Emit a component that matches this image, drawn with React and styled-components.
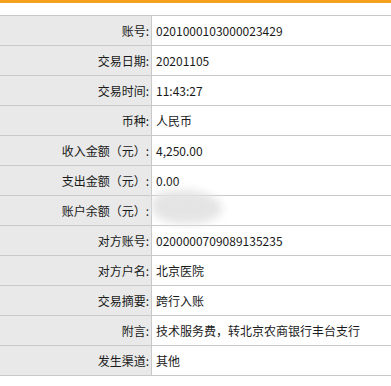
import React from "react";
import styled, { createGlobalStyle } from "styled-components";

const rows = [
  ["账号", "0201000103000023429"],
  ["交易日期", "20201105"],
  ["交易时间", "11:43:27"],
  ["币种", "人民币"],
  ["收入金额（元）", "4,250.00"],
  ["支出金额（元）", "0.00"],
  ["账户余额（元）", null],
  ["对方账号", "0200000709089135235"],
  ["对方户名", "北京医院"],
  ["交易摘要", "跨行入账"],
  ["附言", "技术服务费，转北京农商银行丰台支行"],
  ["发生渠道", "其他"],
];

const App = () => {
  return (
    <Page>
      <Global />
      <TopBar />
      <Table>
        {rows.map(([label, value]) => (
          <Row key={label}>
            <Label>{label}:</Label>
            <Value>{value === null ? <Smudge /> : value}</Value>
          </Row>
        ))}
      </Table>
    </Page>
  );
};

export default App;

const Global = createGlobalStyle`
  body {
    margin: 0;
    background: #fff;
    font-family: "Noto Sans CJK SC", "Noto Sans", sans-serif;
  }
`;
const Page = styled.div`
  width: 391px;
  height: 386px;
  overflow: hidden;
  background: #fff;
`;
const TopBar = styled.div`
  height: 3px;
  background: #f6a11e;
  margin-bottom: 12px;
`;
const Table = styled.div`
  border-top: 1px solid #c9c9c9;
`;
const Row = styled.div`
  display: grid;
  grid-template-columns: 152px 1fr;
  height: 29px;
  border-bottom: 1px solid #c9c9c9;
  font-size: 12px;
  color: #1a1a1a;
`;
const Label = styled.div`
  background: #e8e9e8;
  border-right: 1px solid #c9c9c9;
  display: flex;
  align-items: center;
  justify-content: flex-end;
  padding-right: 2px;
`;
const Value = styled.div`
  display: flex;
  align-items: center;
  padding-left: 4px;
  position: relative;
`;
const Smudge = styled.div`
  position: absolute;
  left: 0;
  top: -6px;
  width: 70px;
  height: 34px;
  background: #e2e2e2;
  border-radius: 40% 60% 50% 50%;
  filter: blur(4px);
  opacity: 0.9;
`;
